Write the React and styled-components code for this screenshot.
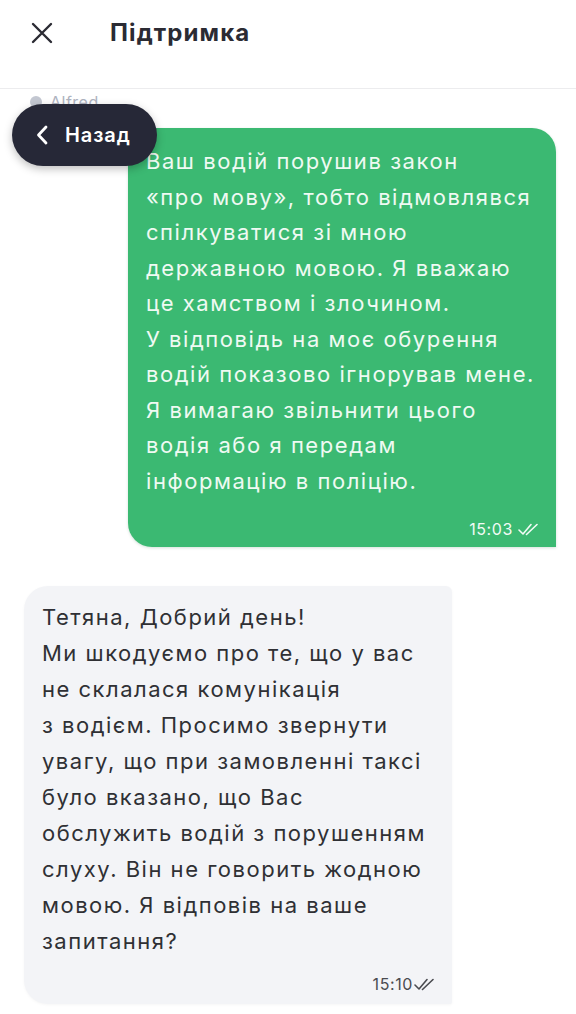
import styled, { createGlobalStyle } from 'styled-components';

const GlobalStyle = createGlobalStyle`
	html, body {
		margin: 0;
		padding: 0;
		background: #ffffff;
	}
	body {
		font-family: Inter, "Noto Sans", sans-serif;
		-webkit-font-smoothing: antialiased;
	}
`;

const Screen = styled.div`
	position: relative;
	width: 576px;
	min-height: 1014px;
	background: #ffffff;
	overflow: hidden;
`;

const Header = styled.header`
	box-sizing: border-box;
	height: 89px;
	display: flex;
	align-items: flex-start;
	gap: 56px;
	padding: 14px 0 0 30px;
	border-bottom: 1px solid #ececee;
`;

const CloseButton = styled.button`
	width: 24px;
	height: 38px;
	padding: 0;
	border: none;
	background: none;
	display: flex;
	align-items: center;
	justify-content: center;
	color: #2b2b33;
`;

const Title = styled.h1`
	margin: 0;
	font-size: 24px;
	line-height: 38px;
	font-weight: 700;
	letter-spacing: 1.1px;
	color: #2b2b33;
`;

const Chat = styled.main`
	display: flex;
	flex-direction: column;
	padding: 4px 0 20px;
`;

const SenderLabel = styled.div`
	display: flex;
	align-items: center;
	gap: 8px;
	margin: 0 0 17px 30px;
	height: 18px;
	font-size: 16px;
	letter-spacing: 0.5px;
	color: #aeb3bf;
`;

const Avatar = styled.span`
	width: 12px;
	height: 12px;
	border-radius: 50%;
	background: #c3c7d1;
`;

const Bubble = styled.div`
	box-sizing: border-box;
	width: 428px;
	align-self: ${p => (p.$out ? 'flex-end' : 'flex-start')};
	margin: ${p => (p.$out ? '0 20px 39px 0' : '0 0 0 24px')};
	padding: ${p => (p.$out ? '16px 16px 8px 18px' : '13px 16px 10px 18px')};
	background: ${p => (p.$out ? '#3bb972' : '#f3f4f7')};
	color: ${p => (p.$out ? '#effaf3' : '#2f3034')};
	border-radius: ${p => (p.$out ? '24px 24px 0 24px' : '24px 6px 2px 24px')};
	box-shadow: ${p => (p.$out ? '0 1px 3px rgba(20, 90, 50, 0.18)' : '0 1px 3px rgba(0, 0, 0, 0.04)')};
`;

const MessageText = styled.p`
	margin: 0;
	font-size: 22px;
	line-height: ${p => (p.$out ? '35.5px' : '36px')};
	white-space: pre;
	letter-spacing: ${p => (p.$out ? '1.55px' : '1.5px')};
`;

const Meta = styled.div`
	display: flex;
	justify-content: flex-end;
	align-items: center;
	gap: ${p => (p.$out ? '5px' : '1px')};
	height: 20px;
	margin-top: ${p => (p.$out ? '20px' : '15px')};
	font-size: 16px;
	letter-spacing: 0.6px;
	color: ${p => (p.$out ? '#f1fbf5' : '#4a4b50')};
`;

const BackButton = styled.button`
	position: absolute;
	top: 104px;
	left: 12px;
	width: 145px;
	height: 62px;
	display: flex;
	align-items: center;
	gap: 17px;
	padding: 0 0 0 24px;
	border: none;
	border-radius: 31px;
	background: #262837;
	color: #ffffff;
	font-family: Inter, "Noto Sans", sans-serif;
	font-size: 20px;
	font-weight: 600;
	letter-spacing: 0.9px;
	box-shadow: 0 3px 8px rgba(0, 0, 0, 0.25);
`;

const CloseIcon = () => (
	<svg width="22" height="22" viewBox="0 0 22 22" fill="none">
		<path d="M2 2 L20 20 M20 2 L2 20" stroke="currentColor" strokeWidth="2.4" strokeLinecap="round" />
	</svg>
);

const Chevron = () => (
	<svg width="12" height="20" viewBox="0 0 12 20" fill="none">
		<path d="M10 2 L2.5 10 L10 18" stroke="#ffffff" strokeWidth="2.8" strokeLinecap="round" strokeLinejoin="round" />
	</svg>
);

const Ticks = ({ color }) => (
	<svg width="22" height="13" viewBox="0 0 22 13" fill="none">
		<path d="M1 7 L5 11 L13 1.5 M8.5 11.5 L19 1.5" stroke={color} strokeWidth="1.6" strokeLinecap="round" strokeLinejoin="round" />
	</svg>
);

const outgoing = `Ваш водій порушив закон
«про мову», тобто відмовлявся
спілкуватися зі мною
державною мовою. Я вважаю
це хамством і злочином.
У відповідь на моє обурення
водій показово ігнорував мене.
Я вимагаю звільнити цього
водія або я передам
інформацію в поліцію.`;

const incoming = `Тетяна, Добрий день!
Ми шкодуємо про те, що у вас
не склалася комунікація
з водієм. Просимо звернути
увагу, що при замовленні таксі
було вказано, що Вас
обслужить водій з порушенням
слуху. Він не говорить жодною
мовою. Я відповів на ваше
запитання?`;

export default function App() {
	return (
		<Screen>
			<GlobalStyle />
			<Header>
				<CloseButton aria-label="Закрити">
					<CloseIcon />
				</CloseButton>
				<Title>Підтримка</Title>
			</Header>

			<Chat>
				<SenderLabel>
					<Avatar />
					Alfred
				</SenderLabel>

				<Bubble $out>
					<MessageText $out>{outgoing}</MessageText>
					<Meta $out>
						15:03
						<Ticks color="#f1fbf5" />
					</Meta>
				</Bubble>

				<Bubble>
					<MessageText>{incoming}</MessageText>
					<Meta>
						15:10
						<Ticks color="#4a4b50" />
					</Meta>
				</Bubble>
			</Chat>

			<BackButton>
				<Chevron />
				Назад
			</BackButton>
		</Screen>
	);
}
